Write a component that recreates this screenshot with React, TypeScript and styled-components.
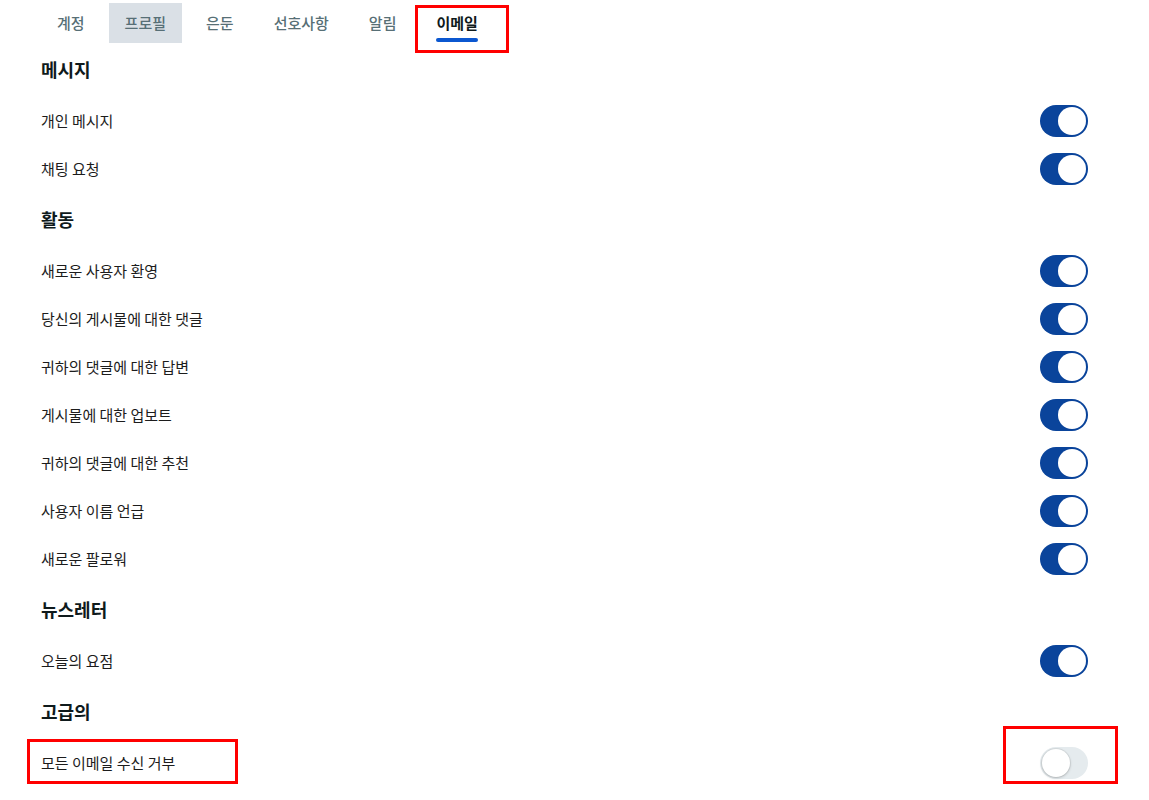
import styled, { createGlobalStyle } from "styled-components";

const GlobalStyle = createGlobalStyle`
  body {
    margin: 0;
    background: #ffffff;
    font-family: "Noto Sans CJK KR", "Noto Sans", sans-serif;
    color: #1c1c1c;
  }
`;

const Page = styled.div`
  width: 1149px;
  height: 800px;
  overflow: hidden;
  box-sizing: border-box;
  padding: 3px 61px 0 41px;
`;

const TabBar = styled.nav`
  display: flex;
  gap: 8px;
  height: 40px;
`;

const Tab = styled.div<{ $selected?: boolean; $active?: boolean }>`
  position: relative;
  display: flex;
  align-items: center;
  justify-content: center;
  padding: 0 16px;
  height: 40px;
  font-size: 15px;
  font-weight: ${(p) => (p.$active ? 600 : 500)};
  color: ${(p) => (p.$active ? "#0f1a1c" : "#576f76")};
  background: ${(p) => (p.$selected ? "#dae0e6" : "transparent")};
  line-height: 20px;
`;

const Underline = styled.span`
  position: absolute;
  left: 16px;
  right: 16px;
  bottom: 1px;
  height: 4px;
  border-radius: 2px;
  background: #0b57d0;
`;

/* red annotation frames drawn over the screenshot */
const Mark = styled.span<{ $t: number; $r: number; $b: number; $l: number }>`
  position: absolute;
  top: ${(p) => p.$t}px;
  right: ${(p) => p.$r}px;
  bottom: ${(p) => p.$b}px;
  left: ${(p) => p.$l}px;
  border: 3px solid #ff0000;
  pointer-events: none;
`;

const Heading = styled.h2`
  margin: 0;
  padding: 14px 0 16px;
  font-size: 18px;
  line-height: 24px;
  font-weight: 700;
  color: #0f1a1c;
`;

const Row = styled.div`
  display: flex;
  align-items: center;
  justify-content: space-between;
  height: 48px;
`;

const Label = styled.span`
  position: relative;
  font-size: 15px;
  line-height: 20px;
  color: #1c1c1c;
`;

const Switch = styled.div<{ $on: boolean }>`
  position: relative;
  display: flex;
  align-items: center;
  justify-content: ${(p) => (p.$on ? "flex-end" : "flex-start")};
  box-sizing: border-box;
  padding: 0 2px;
  width: 48px;
  height: 32px;
  border-radius: 16px;
  background: ${(p) => (p.$on ? "#0a449b" : "#e5ebee")};
  flex-shrink: 0;
`;

const Knob = styled.span<{ $on: boolean }>`
  width: 28px;
  height: 28px;
  border-radius: 50%;
  background: #ffffff;
  box-shadow: ${(p) =>
    p.$on
      ? "0 0 0 1px rgba(10,68,155,0.4)"
      : "0 1px 3px rgba(0,0,0,0.2), 0 0 0 1px rgba(0,0,0,0.06)"};
`;

type Item = { label: string; on: boolean };
type Section = { title: string; items: Item[] };

const sections: Section[] = [
  {
    title: "메시지",
    items: [
      { label: "개인 메시지", on: true },
      { label: "채팅 요청", on: true },
    ],
  },
  {
    title: "활동",
    items: [
      { label: "새로운 사용자 환영", on: true },
      { label: "당신의 게시물에 대한 댓글", on: true },
      { label: "귀하의 댓글에 대한 답변", on: true },
      { label: "게시물에 대한 업보트", on: true },
      { label: "귀하의 댓글에 대한 추천", on: true },
      { label: "사용자 이름 언급", on: true },
      { label: "새로운 팔로워", on: true },
    ],
  },
  {
    title: "뉴스레터",
    items: [{ label: "오늘의 요점", on: true }],
  },
];

const tabs = ["계정", "프로필", "은둔", "선호사항", "알림", "이메일"];

function Toggle({ on, marked }: { on: boolean; marked?: boolean }) {
  return (
    <Switch $on={on}>
      <Knob $on={on} />
      {marked && <Mark $t={-21} $r={-30} $b={-5} $l={-37} />}
    </Switch>
  );
}

export default function App() {
  return (
    <>
      <GlobalStyle />
      <Page>
        <TabBar>
          {tabs.map((t) => (
            <Tab key={t} $selected={t === "프로필"} $active={t === "이메일"}>
              {t}
              {t === "이메일" && (
                <>
                  <Underline />
                  <Mark $t={2} $r={-15} $b={-10} $l={-5} />
                </>
              )}
            </Tab>
          ))}
        </TabBar>
        {sections.map((s) => (
          <section key={s.title}>
            <Heading>{s.title}</Heading>
            {s.items.map((it) => (
              <Row key={it.label}>
                <Label>{it.label}</Label>
                <Toggle on={it.on} />
              </Row>
            ))}
          </section>
        ))}
        <section>
          <Heading>고급의</Heading>
          <Row>
            <Label>
              모든 이메일 수신 거부
              <Mark $t={-14} $r={-63} $b={-11} $l={-14} />
            </Label>
            <Toggle on={false} marked />
          </Row>
        </section>
      </Page>
    </>
  );
}
